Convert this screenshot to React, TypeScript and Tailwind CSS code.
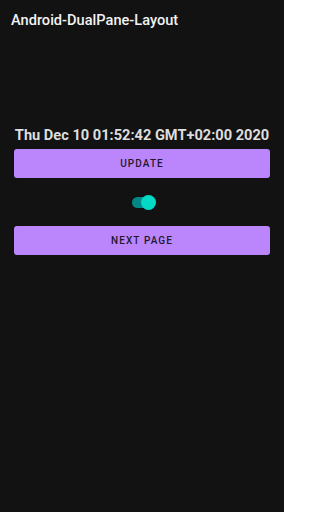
export default function App() {
  return (
    <div
      className="w-[284px] h-[512px] bg-[#121212] flex flex-col"
      style={{ fontFamily: "Roboto, 'Liberation Sans', sans-serif" }}
    >
      <div className="h-[42px] px-[11px] pt-[10px]">
        <h1 className="text-[14.6px] leading-[20px] font-medium text-[#f2f2f2]">
          Android-DualPane-Layout
        </h1>
      </div>

      <div className="flex flex-col items-center px-[14px] pt-[82px]">
        <p className="text-[14.6px] leading-[22px] font-bold text-[#dedede] whitespace-nowrap">
          Thu Dec 10 01:52:42 GMT+02:00 2020
        </p>

        <button className="mt-[3px] w-full h-[29px] rounded-[3px] bg-[#bb86fc] text-[10px] font-medium tracking-[1.1px] text-[#22182e]">
          UPDATE
        </button>

        <div className="mt-[17px] relative w-[22px] h-[14px] flex items-center">
          <div className="w-[18px] h-[11px] rounded-full bg-[#018786] ml-[1px]" />
          <div className="absolute right-[-3px] top-[0px] w-[15px] h-[15px] rounded-full bg-[#03dac5]" />
        </div>

        <button className="mt-[17px] w-full h-[29px] rounded-[3px] bg-[#bb86fc] text-[10px] font-medium tracking-[1.1px] text-[#22182e]">
          NEXT PAGE
        </button>
      </div>
    </div>
  );
}
